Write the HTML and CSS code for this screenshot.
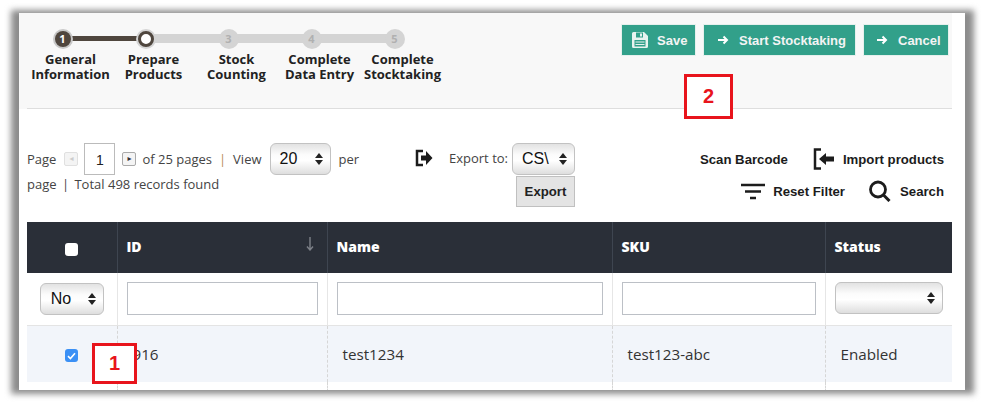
FILE: index.html
```html
<!DOCTYPE html>
<html lang="en">
<head>
    <meta charset="UTF-8">
    <title>Stocktaking</title>
    <link rel="stylesheet" href="styles.css">
</head>
<body>
    <div class="frame">
        <div class="top">
            <div class="steps">
                <div class="step done"><span class="dot">1</span><span class="name">General<br>Information</span></div>
                <div class="step current"><span class="dot"></span><span class="name">Prepare<br>Products</span></div>
                <div class="step"><span class="dot">3</span><span class="name">Stock<br>Counting</span></div>
                <div class="step"><span class="dot">4</span><span class="name">Complete<br>Data Entry</span></div>
                <div class="step last"><span class="dot">5</span><span class="name">Complete<br>Stocktaking</span></div>
            </div>
            <div class="actions">
                <button class="btn btn-save">
                    <svg width="18" height="18" viewBox="0 0 18 18"><path d="M1 2.500A1.500 1.500 0 0 1 2.500 1H13l4 4v10.500A1.500 1.500 0 0 1 15.500 17h-13A1.500 1.500 0 0 1 1 15.500z" fill="#e8f3ef"/><rect x="5" y="1.500" width="7" height="5" fill="#32a08a"/><rect x="9" y="2.500" width="2" height="3" fill="#e8f3ef"/><rect x="3.500" y="9" width="11" height="6.500" fill="#32a08a"/><path d="M4.500 11h9M4.500 13.500h9" stroke="#e8f3ef" stroke-width="1"/></svg>
                    Save
                </button>
                <button class="btn btn-start">
                    <svg class="arrow" width="12" height="10" viewBox="0 0 12 10"><path d="M1 5h9M6.500 1.500 10 5 6.500 8.500" fill="none" stroke="#fff" stroke-width="2"/></svg>
                    Start Stocktaking
                </button>
                <button class="btn btn-cancel">
                    <svg class="arrow" width="12" height="10" viewBox="0 0 12 10"><path d="M1 5h9M6.500 1.500 10 5 6.500 8.500" fill="none" stroke="#fff" stroke-width="2"/></svg>
                    Cancel
                </button>
            </div>
        </div>

        <div class="toolbar">
            <div class="pager">
                <div class="pager-line">
                    <span>Page</span>
                    <span class="page-arrow off">&#9666;</span>
                    <span class="page-input">1</span>
                    <span class="page-arrow next">&#9656;</span>
                    <span class="pages">of 25 pages</span>
                    <span class="sep">|</span>
                    <span>View</span>
                    <span class="select select-view">20</span>
                    <span>per</span>
                </div>
                <div class="pager-line2">page <span class="sep2">|</span> Total 498 records found</div>
            </div>
            <div class="export">
                <svg class="export-icon" width="18" height="20" viewBox="0 0 18 20"><path d="M8 3H2v14h6" fill="none" stroke="#1c1c1c" stroke-width="2.500"/><path d="M6 7.500h5V3l6.500 7-6.500 7v-4.500H6z" fill="#1c1c1c"/></svg>
                <span class="export-label">Export to:</span>
                <div class="export-col">
                    <span class="select select-csv">CS\</span>
                    <button class="export-btn">Export</button>
                </div>
            </div>
            <div class="tools">
                <div class="tools-row">
                    <span class="tool">Scan Barcode</span>
                    <span class="tool tool-import">
                        <svg width="22" height="22" viewBox="0 0 22 22"><path d="M8 1.500H2v19h6" fill="none" stroke="#1c1c1c" stroke-width="2.500"/><path d="M21 8.500h-8V5l-7 6 7 6v-3.500h8z" fill="#1c1c1c"/></svg>
                        Import products
                    </span>
                </div>
                <div class="tools-row row2">
                    <span class="tool tool-filter">
                        <svg width="24" height="17" viewBox="0 0 24 17"><path d="M0 2h24M4 8.500h16M9 15h6" stroke="#1c1c1c" stroke-width="2.500"/></svg>
                        Reset Filter
                    </span>
                    <span class="tool tool-search">
                        <svg width="24" height="22" viewBox="0 0 24 22"><circle cx="10" cy="9.500" r="7.500" fill="none" stroke="#1c1c1c" stroke-width="2.800"/><path d="M15.500 15l6 6" stroke="#1c1c1c" stroke-width="3"/></svg>
                        Search
                    </span>
                </div>
            </div>
        </div>

        <table class="grid">
            <colgroup>
                <col class="c-check"><col class="c-id"><col class="c-name"><col class="c-sku"><col class="c-status">
            </colgroup>
            <thead>
                <tr class="head">
                    <th class="center"><span class="check"></span></th>
                    <th class="th-id">ID
                        <svg class="sort" width="8" height="14" viewBox="0 0 8 14"><path d="M4 0v12M1 9.500 4 13l3-3.500" fill="none" stroke="#7d8188" stroke-width="1.400"/></svg>
                    </th>
                    <th>Name</th>
                    <th>SKU</th>
                    <th>Status</th>
                </tr>
                <tr class="filters">
                    <td class="center"><span class="select select-no">No</span></td>
                    <td><span class="field"></span></td>
                    <td><span class="field"></span></td>
                    <td><span class="field"></span></td>
                    <td><span class="select select-status"></span></td>
                </tr>
            </thead>
            <tbody>
                <tr class="row">
                    <td class="center">
                        <span class="check checked"><svg width="9" height="8" viewBox="0 0 9 8"><path d="M1 4.200 3.400 6.500 8 1.200" fill="none" stroke="#fff" stroke-width="1.600"/></svg></span>
                    </td>
                    <td>916</td>
                    <td>test1234</td>
                    <td>test123-abc</td>
                    <td>Enabled</td>
                </tr>
                <tr class="row-next"><td></td><td></td><td></td><td></td><td></td></tr>
            </tbody>
        </table>

        <div class="callout callout-1">1</div>
        <div class="callout callout-2">2</div>
    </div>
</body>
</html>
```

FILE: styles.css
```css
* {
    box-sizing: border-box;
}
html, body {
    margin: 0;
    height: 404px;
    overflow: hidden;
    background-color: #fff;
}
body {
    padding: 13px 19px 0;
    font-family: "Open Sans", Arial, sans-serif;
    color: #333;
}
/* soft grey edge round the screenshot */
body::before {
    content: "";
    position: absolute;
    left: 11px;
    top: 10px;
    width: 963px;
    height: 384px;
    background-color: #8c8c8c;
    filter: blur(3px);
}
.frame {
    position: relative;
    width: 946px;
    height: 377px;
    padding: 0 13px 0 8px;
    overflow: hidden;
    background-color: #fff;
}

/* top band */
.top {
    display: flex;
    justify-content: space-between;
    height: 96px;
    margin: 0 0 0 -8px;
    padding: 0 3px 0 10px;
    background: linear-gradient(#dedede, #dedede) 8px 100% / 100% 1px no-repeat, #f8f8f8;
}
.steps {
    display: flex;
    padding-top: 16px;
}
.step {
    position: relative;
    display: flex;
    flex-direction: column;
    align-items: center;
    width: 83px;
}
.step::after {
    content: "";
    position: absolute;
    left: 33px;
    top: 5px;
    width: 83px;
    height: 9px;
    background-color: #d4d4d4;
}
.step.last::after {
    display: none;
}
.step.done::after {
    top: 7px;
    height: 5px;
    background-color: #4f463e;
}
.dot {
    position: relative;
    z-index: 1;
    width: 20px;
    height: 20px;
    margin-right: 16px;
    border-radius: 50%;
    background-color: #d4d4d4;
    color: #b0b0b0;
    font-size: 11px;
    font-weight: 700;
    line-height: 20px;
    text-align: center;
}
.done .dot {
    width: 16px;
    height: 16px;
    margin: 2px 18px 2px 2px;
    background-color: #4f463e;
    color: #fff;
    box-shadow: 0 0 0 2px #c8c8c8;
    line-height: 16px;
}
.current .dot {
    width: 16px;
    height: 16px;
    margin: 2px 18px 2px 2px;
    background-color: #fff;
    border: 3px solid #4f463e;
    box-shadow: 0 0 0 2px #d4d4d4;
}
.name {
    margin-top: 3px;
    font-size: 13px;
    font-weight: 700;
    line-height: 15px;
    text-align: center;
    color: #222;
    white-space: nowrap;
}
.actions {
    display: flex;
    gap: 7px;
    align-items: flex-start;
    padding-top: 11px;
}
.btn {
    display: flex;
    align-items: center;
    height: 32px;
    border: 1px solid #e6f0ed;
    border-radius: 0;
    background-color: #32a08a;
    color: #f4f4f4;
    font-family: "Liberation Sans", Arial, sans-serif;
    font-size: 13px;
    font-weight: 700;
    white-space: nowrap;
    padding: 0;
}
.btn-save {
    width: 75px;
    padding-left: 9px;
    gap: 8px;
}
.btn-start {
    width: 153px;
    padding-left: 13px;
    gap: 10px;
}
.btn-cancel {
    width: 86px;
    padding-left: 12px;
    gap: 10px;
}

/* pager and tools */
.toolbar {
    position: relative;
    display: flex;
    height: 113px;
    font-size: 13px;
    color: #444;
}
.pager {
    width: 345px;
    padding-top: 34px;
}
.pager-line {
    display: flex;
    align-items: center;
    height: 32px;
    white-space: nowrap;
}
.pager-line2 {
    margin-top: 1px;
    line-height: 17px;
}
.pages {
    margin-left: 6px;
}
.sep {
    margin: 0 7px;
    color: #b98a55;
}
.sep2 {
    margin: 0 2px;
}
.page-arrow {
    display: inline-block;
    width: 14px;
    height: 14px;
    border: 1px solid #aaa;
    border-radius: 2px;
    background-color: #f4f4f4;
    color: #333;
    font-family: "DejaVu Sans", sans-serif;
    font-size: 8px;
    line-height: 12px;
    text-align: center;
}
.page-arrow.off {
    margin: 0 6px 0 8px;
    border-color: #e0e0e0;
    color: #ccc;
}
.page-arrow.next {
    margin-left: 7px;
}
.page-input {
    display: inline-block;
    width: 31px;
    height: 32px;
    border: 1px solid #bbb;
    color: #222;
    font-family: "Liberation Sans", Arial, sans-serif;
    font-size: 14px;
    line-height: 32px;
    text-align: center;
}
.select {
    position: relative;
    display: inline-block;
    height: 32px;
    border: 1px solid #c2c2c2;
    border-radius: 6px;
    background: linear-gradient(#e2e2e2, #fbfbfb 35%, #fff 55%, #dedede);
    color: #111;
    font-family: "Liberation Sans", Arial, sans-serif;
    font-size: 16px;
    line-height: 30px;
    padding-left: 9px;
}
.select::after {
    content: "";
    position: absolute;
    right: 7px;
    top: 9px;
    width: 0;
    height: 0;
    border-left: 4px solid transparent;
    border-right: 4px solid transparent;
    border-bottom: 5px solid #222;
}
.select::before {
    content: "";
    position: absolute;
    right: 7px;
    top: 16px;
    width: 0;
    height: 0;
    border-left: 4px solid transparent;
    border-right: 4px solid transparent;
    border-top: 5px solid #222;
}
.select-view {
    width: 61px;
    margin: 0 8px;
}
.export {
    display: flex;
    align-items: flex-start;
    padding-top: 34px;
}
.export-icon {
    margin: 5px 16px 0 43px;
}
.export-label {
    line-height: 30px;
    margin-right: 4px;
}
.export-col {
    display: flex;
    flex-direction: column;
}
.select-csv {
    width: 63px;
}
.export-btn {
    width: 59px;
    height: 31px;
    margin: 1px 0 0 4px;
    border: 1px solid #c0c0c0;
    border-radius: 0;
    background-color: #e4e4e4;
    color: #222;
    font-family: "Liberation Sans", Arial, sans-serif;
    font-size: 13.200px;
    font-weight: 700;
    padding: 0;
}
.tools {
    flex: 1;
    padding: 34px 8px 0 0;
    font-family: "Liberation Sans", Arial, sans-serif;
    color: #1c1c1c;
}
.tools-row {
    display: flex;
    justify-content: flex-end;
    align-items: center;
    gap: 25px;
    height: 32px;
    font-size: 13.200px;
    font-weight: 700;
}
.row2 {
    gap: 23px;
}
.tool {
    display: flex;
    align-items: center;
    gap: 8px;
    white-space: nowrap;
}

/* table */
.grid {
    width: 925px;
    table-layout: fixed;
    border-collapse: collapse;
    font-size: 15.200px;
}
.c-check { width: 90px; }
.c-id { width: 210px; }
.c-name { width: 285px; }
.c-sku { width: 213px; }
.c-status { width: 127px; }
.head th {
    height: 51px;
    padding: 0 0 2px 9px;
    border-left: 1px solid #3e4550;
    background-color: #2a2f38;
    color: #fff;
    font-size: 14px;
    font-weight: 800;
    text-align: left;
}
.head th:first-child {
    border-left: 0;
}
.center {
    text-align: center !important;
    padding: 0 !important;
}
.th-id {
    position: relative;
}
.sort {
    position: absolute;
    right: 13px;
    top: 15px;
}
.check {
    display: inline-flex;
    align-items: center;
    justify-content: center;
    width: 13px;
    height: 13px;
    border-radius: 3px;
    background-color: #fff;
    vertical-align: middle;
}
.check.checked {
    background-color: #3b90f5;
}
.filters td {
    height: 52px;
    padding: 0 9px 1px;
    border-left: 1px solid #e6e6e6;
    border-bottom: 1px solid #e4e4e4;
    background-color: #fff;
}
.filters td:first-child {
    border-left: 0;
}
.field {
    display: block;
    height: 33px;
    border: 1px solid #bcc0c6;
    background-color: #fff;
}
.select-no {
    width: 64px;
    text-align: left;
    padding-left: 10px;
}
.select-status {
    display: block;
}
.row td {
    height: 57px;
    padding: 0 0 0 15px;
    border-left: 1px dashed #d6d6d6;
    background-color: #f2f5fa;
    color: #333;
}
.row td:first-child {
    border-left: 0;
}
.row-next td {
    height: 10px;
    padding: 0;
    border-left: 1px dashed #d6d6d6;
}
.row-next td:first-child {
    border-left: 0;
}

/* red number boxes on top of the screenshot */
.callout {
    position: absolute;
    display: flex;
    align-items: center;
    justify-content: center;
    border: 3px solid #e8141c;
    background-color: #fff;
    color: #e8141c;
    font-family: "Liberation Sans", Arial, sans-serif;
    font-size: 20px;
    font-weight: 700;
}
.callout-1 {
    left: 73px;
    top: 330px;
    width: 45px;
    height: 41px;
}
.callout-2 {
    left: 665px;
    top: 61px;
    width: 49px;
    height: 45px;
}
```
